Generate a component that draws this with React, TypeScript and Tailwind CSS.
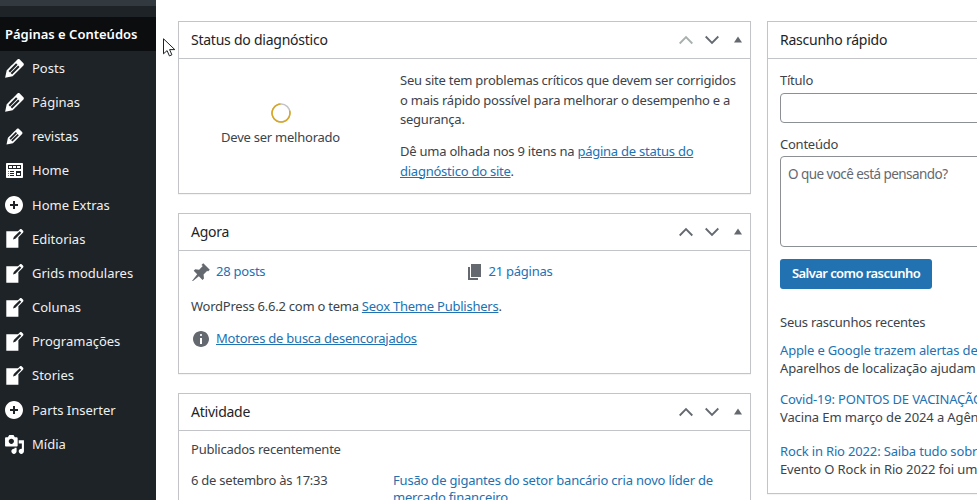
import { ReactNode } from "react";

const PENCIL =
  "M13.89 3.39l2.71 2.72c.46.46.42 1.24.03 1.64l-8.01 8.02-5.56 1.16 1.16-5.58s7.6-7.63 7.99-8.03c.39-.39 1.22-.39 1.68.07zm-2.73 2.79l-5.59 5.61 1.11 1.11 5.54-5.65zm-2.97 8.23l5.58-5.6-1.07-1.08-5.59 5.6z";
const WRITE =
  "M16.89 1.2l1.41 1.41c.39.39.39 1.02 0 1.41L14 8.33V18H3V3h10.67l1.8-1.8c.4-.39 1.03-.4 1.42 0zm-5.66 8.48l5.37-5.36-1.42-1.42-5.36 5.37-.71 2.12z";
const TABLE =
  "M19 16V3c0-.55-.45-1-1-1H3c-.55 0-1 .45-1 1v13c0 .55.45 1 1 1h15c.55 0 1-.45 1-1zM4 4h13v4H4V4zm1 1v2h3V5H5zm4 0v2h3V5H9zm4 0v2h3V5h-3zm-8.5 5c.28 0 .5.22.5.5s-.22.5-.5.5-.5-.22-.5-.5.22-.5.5-.5zM6 10h4v1H6v-1zm6 0h5v5h-5v-5zm-7.5 2c.28 0 .5.22.5.5s-.22.5-.5.5-.5-.22-.5-.5.22-.5.5-.5zM6 12h4v1H6v-1zm7 0v2h3v-2h-3zm-8.5 2c.28 0 .5.22.5.5s-.22.5-.5.5-.5-.22-.5-.5.22-.5.5-.5zM6 14h4v1H6v-1z";
const PLUS =
  "M10 1c-5 0-9 4-9 9s4 9 9 9 9-4 9-9-4-9-9-9zm1 5v3h3v2h-3v3H9v-3H6V9h3V6h2z";
const MEDIA =
  "M13 11V4c0-.55-.45-1-1-1h-1.67L9 1H5L3.67 3H2c-.55 0-1 .45-1 1v7c0 .55.45 1 1 1h10c.55 0 1-.45 1-1zM7 4.5c1.38 0 2.5 1.12 2.5 2.5S8.38 9.5 7 9.5 4.5 8.38 4.5 7 5.62 4.5 7 4.5zM14 6h5v10.5c0 1.38-1.12 2.5-2.5 2.5S14 17.88 14 16.5s1.12-2.5 2.5-2.5c.17 0 .34.02.5.05V9h-3V6zm-4 8.05V13h2v3.5c0 1.38-1.12 2.5-2.5 2.5S7 17.88 7 16.5 8.12 14 9.5 14c.17 0 .34.02.5.05z";
const PIN =
  "M10.44 3.02l1.82-1.82 6.53 6.53-1.82 1.82-.7-.7-3.7 3.7.4 3.9-1.5 1.5-3.6-3.6L2 19l-1-.1 5.2-6.6-3.5-3.5 1.5-1.5 3.9.4 3.7-3.7z";
const PAGES = "M6 15V2h10v13H6zm-1 1h8v2H3V5h2v11z";
const INFO =
  "M10 2c4.42 0 8 3.58 8 8s-3.58 8-8 8-8-3.58-8-8 3.58-8 8-8zm1 4c0-.55-.45-1-1-1s-1 .45-1 1 .45 1 1 1 1-.45 1-1zm0 9V9H9v6h2z";

const menu = [
  { label: "Posts", d: PENCIL, size: 27 },
  { label: "Páginas", d: PENCIL, size: 27 },
  { label: "revistas", d: PENCIL, size: 23 },
  { label: "Home", d: TABLE, size: 20 },
  { label: "Home Extras", d: PLUS, size: 20 },
  { label: "Editorias", d: WRITE, size: 22 },
  { label: "Grids modulares", d: WRITE, size: 22 },
  { label: "Colunas", d: WRITE, size: 22 },
  { label: "Programações", d: WRITE, size: 22 },
  { label: "Stories", d: WRITE, size: 22 },
  { label: "Parts Inserter", d: PLUS, size: 20 },
  { label: "Mídia", d: MEDIA, size: 21 },
];

function Icon({ d, size = 20, className }: { d: string; size?: number; className?: string }) {
  return (
    <svg viewBox="0 0 20 20" width={size} height={size} fill="currentColor" className={className}>
      <path d={d} />
    </svg>
  );
}

function Card({ title, className, children }: { title: string; className?: string; children: ReactNode }) {
  return (
    <section className={`border border-[#c3c4c7] bg-white shadow-[0_1px_1px_rgba(0,0,0,0.04)] ${className ?? ""}`}>
      <div className="flex h-[37px] items-center justify-between border-b border-[#c3c4c7] pl-3 pr-2">
        <h2 className="pb-[2px] text-[14px] text-[#1d2327]">{title}</h2>
        {title !== "Rascunho rápido" && (
          <div className="flex items-center text-[#646970]">
            <svg width="14" height="10" viewBox="0 0 14 10" fill="none" stroke="currentColor" strokeWidth="1.8" className={title === "Status do diagnóstico" ? "text-[#a7b0ad]" : ""}>
              <path d="M.7 8.500 7 2l6.300 6.500" />
            </svg>
            <svg width="14" height="10" viewBox="0 0 14 10" fill="none" stroke="currentColor" strokeWidth="1.8" className="ml-[12px]">
              <path d="M.7 1.500 7 8l6.300-6.500" />
            </svg>
            <svg width="8" height="7" viewBox="0 0 8 7" fill="currentColor" className="ml-[15px] mb-[2px]">
              <path d="M4 .500 8 6.500H0z" />
            </svg>
          </div>
        )}
      </div>
      {children}
    </section>
  );
}

function Draft({ title, body, className }: { title: string; body: string; className?: string }) {
  return (
    <div className={`whitespace-nowrap ${className ?? ""}`}>
      <a className="block leading-[18px] tracking-[-0.16px] text-[#2271b1]">{title}</a>
      <p className="leading-[18px] tracking-[-0.12px]">{body}</p>
    </div>
  );
}

export default function App() {
  return (
    <div className="relative flex h-[500px] w-[977px] overflow-hidden bg-white font-['Noto_Sans',sans-serif] text-[13px] tracking-[-0.24px] text-[#3c434a]">
      <aside className="w-[156px] shrink-0 bg-[#1d2327] tracking-normal text-white">
        <div className="h-[6px] bg-[#32393f]" />
        <div className="h-[11px]" />
        <div className="flex h-[34px] items-center bg-[#0c0d0f] pl-[5px] pt-[1px] font-semibold">Páginas e Conteúdos</div>
        <nav className="pt-[0.5px]">
          {menu.map((item) => (
            <div key={item.label} className="flex h-[34.180px] items-center">
              <div className="flex w-[32px] justify-center pr-[4px]">
                <Icon d={item.d} size={item.size} />
              </div>
              <span className="text-[#f0f0f1]">{item.label}</span>
            </div>
          ))}
        </nav>
      </aside>

      <main className="flex items-start gap-[16px] pl-[22px] pt-[21px]">
        <div className="flex w-[573px] shrink-0 flex-col gap-[19px]">
          <Card title="Status do diagnóstico" className="h-[173px]">
            <div className="grid grid-cols-[203px_1fr] pt-[12px]">
              <div className="flex flex-col items-center pt-[32px]">
                <svg width="20" height="20" viewBox="0 0 20 20" fill="none" strokeWidth="1.500">
                  <circle cx="10" cy="10" r="9" stroke="#c3c4c7" />
                  <circle cx="10" cy="10" r="9" stroke="#dba617" strokeDasharray="44 57" transform="rotate(-15 10 10)" />
                </svg>
                <p className="mt-[4px] leading-[20px]">Deve ser melhorado</p>
              </div>
              <div className="pl-[18px] pr-3 leading-[19.500px]">
                <p>Seu site tem problemas críticos que devem ser corrigidos o mais rápido possível para melhorar o desempenho e a segurança.</p>
                <p className="mt-[12.500px]">
                  Dê uma olhada nos 9 itens na <a className="text-[#2271b1] underline">página de status do diagnóstico do site</a>.
                </p>
              </div>
            </div>
          </Card>

          <Card title="Agora" className="h-[161px]">
            <div className="px-3 pt-[11px]">
              <div className="grid grid-cols-2">
                <div className="flex items-center gap-[5px] text-[#2271b1]">
                  <Icon d={PIN} size={20} className="text-[#646970]" />
                  28 posts
                </div>
                <div className="flex items-center gap-[4px] text-[#2271b1]">
                  <Icon d={PAGES} size={20} className="text-[#646970]" />
                  21 páginas
                </div>
              </div>
              <p className="mt-[15px] leading-[19.500px]">
                WordPress 6.6.2 com o tema <a className="text-[#2271b1] underline">Seox Theme Publishers</a>.
              </p>
              <div className="mt-[12px] flex items-center gap-[5px]">
                <Icon d={INFO} size={20} className="text-[#646970]" />
                <a className="text-[#2271b1] underline">Motores de busca desencorajados</a>
              </div>
            </div>
          </Card>

          <Card title="Atividade" className="h-[200px]">
            <div className="px-3 pt-[9px]">
              <h3 className="text-[13px] leading-[19.500px]">Publicados recentemente</h3>
              <div className="mt-[12px] grid grid-cols-[202px_1fr] leading-[17.500px]">
                <span>6 de setembro às 17:33</span>
                <a className="tracking-[-0.2px] text-[#2271b1]">Fusão de gigantes do setor bancário cria novo líder de mercado financeiro</a>
              </div>
            </div>
          </Card>
        </div>

        <Card title="Rascunho rápido" className="h-[473px] w-[340px] shrink-0">
          <div className="px-3 pt-[12px]">
            <label className="block leading-[18px]">Título</label>
            <div className="mt-[4px] h-[30px] rounded-[4px] border border-[#8c8f94]" />
            <label className="mt-[12px] block leading-[18px]">Conteúdo</label>
            <div className="mt-[3px] h-[91px] rounded-[4px] border border-[#8c8f94] px-[7px] pt-[7px] text-[13.500px] leading-[21px] tracking-[-0.56px] text-[#646970]">O que você está pensando?</div>
            <button className="mt-[12px] h-[30px] w-[152px] rounded-[3px] bg-[#2271b1] font-semibold tracking-[-0.56px] text-white">Salvar como rascunho</button>
            <p className="mt-[23px] leading-[20px]">Seus rascunhos recentes</p>
            <div className="mt-[9px]">
              <Draft title="Apple e Google trazem alertas de" body="Aparelhos de localização ajudam" className="mb-[13px]" />
              <Draft title="Covid-19: PONTOS DE VACINAÇÃO" body="Vacina Em março de 2024 a Agência" className="mb-[16px]" />
              <Draft title="Rock in Rio 2022: Saiba tudo sobre" body="Evento O Rock in Rio 2022 foi um" />
            </div>
          </div>
        </Card>
      </main>

      <svg width="14" height="20" viewBox="0 0 14 20" className="absolute left-[163px] top-[38px]" fill="#fff" stroke="#1d2327" strokeWidth="1">
        <path d="M.500.800v15l3.600-3.200 2.300 5.300 2.500-1.100-2.300-5.200h5.200z" />
      </svg>
    </div>
  );
}
